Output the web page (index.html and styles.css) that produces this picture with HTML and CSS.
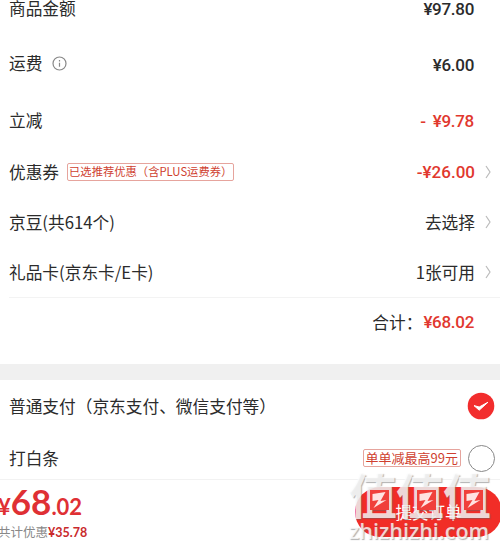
FILE: index.html
```html
<!DOCTYPE html>
<html lang="zh-CN">
<head>
  <meta charset="UTF-8" />
  <meta name="viewport" content="width=device-width, initial-scale=1" />
  <title>确认订单</title>
  <link rel="stylesheet" href="styles.css">
</head>
<body>

  <!-- 金额明细 -->
  <div class="detail">
    <div class="row goods">
      <span class="label">商品金额</span>
      <span class="price">¥97.80</span>
    </div>
    <div class="row freight">
      <span class="label">运费</span>
      <svg class="info" viewBox="0 0 15 15">
        <circle cx="7.5" cy="7.5" r="6.5" />
        <path d="M7.5 6.8v4M7.5 4v1.4" />
      </svg>
      <span class="price">¥6.00</span>
    </div>
    <div class="row minus">
      <span class="label">立减</span>
      <span class="price red">- ¥9.78</span>
    </div>
    <div class="row coupon">
      <span class="label">优惠券</span>
      <span class="tag">已选推荐优惠（含PLUS运费券）</span>
      <span class="price red">-¥26.00</span>
      <svg class="arrow" viewBox="0 0 6 14"><path d="M1 1l4 6-4 6" /></svg>
    </div>
    <div class="row">
      <span class="label">京豆(共614个)</span>
      <span class="value">去选择</span>
      <svg class="arrow" viewBox="0 0 6 14"><path d="M1 1l4 6-4 6" /></svg>
    </div>
    <div class="row">
      <span class="label">礼品卡(京东卡/E卡)</span>
      <span class="value">1张可用</span>
      <svg class="arrow" viewBox="0 0 6 14"><path d="M1 1l4 6-4 6" /></svg>
    </div>
    <div class="row total">
      <span class="value">合计：</span>
      <span class="sum">¥68.02</span>
    </div>
  </div>

  <!-- 支付方式 -->
  <div class="pay">
    <div class="row pay-row">
      <span class="label">普通支付（京东支付、微信支付等）</span>
      <svg class="check" viewBox="0 0 28 28">
        <circle cx="14" cy="14" r="13.3" />
        <path d="M7 13.6l5.2 4.6 8.8-8-8.8 4.8z" />
      </svg>
    </div>
    <div class="row pay-row last">
      <span class="label">打白条</span>
      <span class="tag promo">单单减最高99元</span>
      <span class="radio"></span>
    </div>
  </div>

  <!-- 底部提交栏 -->
  <div class="bottom">
    <div class="amount">
      <div class="big"><span class="yen">¥</span>68<span class="cents">.02</span></div>
      <div class="saved">共计优惠<b>¥35.78</b></div>
    </div>
    <button class="submit">提交订单</button>
    <div class="watermark">
      <div class="mark">
        <span>值<svg class="bolt" viewBox="0 0 18 20"><path d="M2 4l13-2-5 9 6-1L3 18l5-8-6 1z" /></svg></span>
        <span>值<svg class="bolt" viewBox="0 0 18 20"><path d="M2 4l13-2-5 9 6-1L3 18l5-8-6 1z" /></svg></span>
        <span>值<svg class="bolt" viewBox="0 0 18 20"><path d="M2 4l13-2-5 9 6-1L3 18l5-8-6 1z" /></svg></span>
      </div>
      <div class="site">zhizhizhi.com</div>
    </div>
  </div>

</body>
</html>
```

FILE: styles.css
```css
body {
  margin: 0;
  height: 550px;
  overflow: hidden;
  background: #fff;
  color: #2b2b2b;
  font-family: "Noto Sans CJK SC", sans-serif;
  font-size: 16.7px;
}

.row {
  display: flex;
  align-items: center;
  height: 50px;
  padding: 0 9px 0 9px;
  white-space: nowrap;
}

.goods {
  height: 35px;
  margin-top: -10px;
  padding-right: 26px;
}

.freight {
  height: 76px;
  padding-right: 26px;
}

.minus {
  height: 37px;
  padding-right: 26px;
}

.goods .price,
.freight .price,
.minus .price {
  padding-top: 3px;
}

.minus .price {
  word-spacing: 3px;
}

.coupon {
  margin-top: 9px;
}

.price,
.value {
  margin-left: auto;
}

.price,
.sum {
  font-family: Roboto, sans-serif;
  font-weight: 500;
  font-size: 17px;
  letter-spacing: -0.3px;
}

.red,
.sum {
  color: #e1382e;
}

.coupon .price {
  letter-spacing: 0;
}

.info {
  width: 15px;
  height: 15px;
  margin-left: 10px;
  fill: none;
  stroke: #888;
  stroke-width: 1.2;
}

.arrow {
  width: 6px;
  height: 14px;
  margin-left: 10px;
  fill: none;
  stroke: #bbb;
  stroke-width: 1.2;
}

.tag {
  height: 16px;
  margin-left: 8px;
  padding: 0 1px;
  border: 1px solid #e6a49d;
  border-radius: 2px;
  color: #cf3f30;
  font-size: 11.3px;
  line-height: 15px;
}

.total {
  height: 48px;
  margin-left: 9px;
  padding: 0 26px 18px 0;
  border-top: 1px solid #f3f3f3;
}

.total .sum {
  margin-left: 1px;
}

.pay {
  border-top: 16px solid #f0f0f0;
}

.pay-row {
  height: 51px;
  padding-right: 5px;
}

.last {
  height: 54px;
  margin-bottom: -6px;
}

.check {
  width: 28px;
  height: 28px;
  margin-left: auto;
}

.check circle {
  fill: #f22d2d;
}

.check path {
  fill: #fff;
  stroke: #fff;
  stroke-linejoin: round;
}

.promo {
  margin-left: auto;
  padding: 0 2px;
  font-size: 13px;
}

.radio {
  width: 25px;
  height: 25px;
  margin-left: 7px;
  border: 1px solid #888;
  border-radius: 50%;
}

.bottom {
  position: relative;
  display: flex;
  height: 71px;
  border-top: 1px solid #f2f2f2;
}

.amount {
  margin-left: -2px;
}

.big {
  height: 43px;
  color: #df3034;
  font: 700 35px/43px Lato, sans-serif;
}

.yen,
.cents {
  font-size: 22px;
}

.saved {
  color: #888;
  font-size: 12.5px;
  line-height: 18px;
}

.saved b {
  color: #c92a2c;
  font-family: Lato, sans-serif;
}

.submit {
  width: 147px;
  height: 50px;
  margin: 7px -2px 0 auto;
  border: none;
  border-radius: 25px;
  background: #f12d27;
  color: #fff;
  font: 16.5px "Noto Sans CJK SC", sans-serif;
}

.watermark {
  position: absolute;
  left: 349px;
  top: -12px;
  color: rgba(255, 255, 255, 0.78);
  text-shadow: 1px 1px 1px rgba(100, 100, 100, 0.5);
  white-space: nowrap;
}

.mark {
  display: flex;
  height: 51px;
  font-size: 48px;
  font-weight: 700;
  line-height: 50px;
}

.mark span {
  position: relative;
  width: 47px;
}

.bolt {
  position: absolute;
  left: 21px;
  top: 22px;
  width: 19px;
  height: 20px;
  background: #f0403b;
  fill: #ffe3e1;
}

.site {
  font: 600 21.5px/24px "Open Sans", sans-serif;
}
```
